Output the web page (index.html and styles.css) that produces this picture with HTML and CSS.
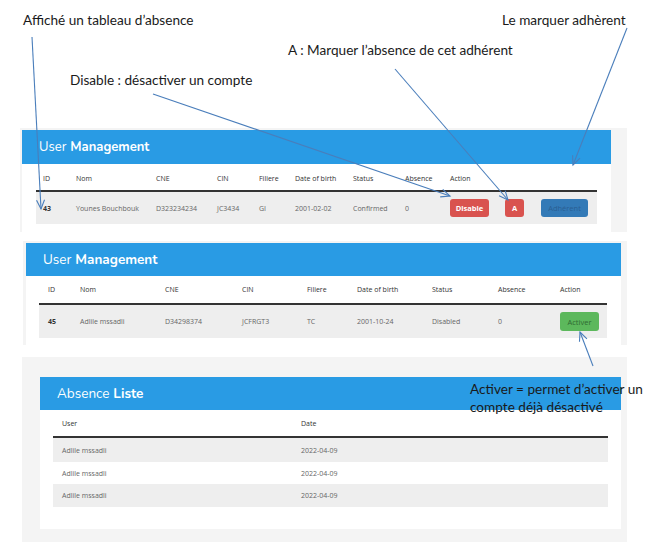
FILE: index.html
```html
<!DOCTYPE html>
<html lang="fr">
<head>
<meta charset="utf-8">
<title>User Management</title>
<link rel="stylesheet" href="styles.css">
</head>
<body>
<div class="page">
  <section class="wrap wrap1">
    <div class="card card1">
      <div class="bar"><span class="light">User</span> <b>Management</b></div>
      <table class="tbl t1">
        <colgroup><col><col><col><col><col><col><col><col><col></colgroup>
        <thead><tr><th>ID</th><th>Nom</th><th>CNE</th><th>CIN</th><th>Filiere</th><th>Date of birth</th><th>Status</th><th>Absence</th><th>Action</th></tr></thead>
        <tbody><tr class="odd"><td class="id">43</td><td>Younes Bouchbouk</td><td>D323234234</td><td>JC3434</td><td>GI</td><td>2001-02-02</td><td>Confirmed</td><td>0</td>
          <td><div class="actions"><span class="btn red w-dis">Disable</span><span class="btn red w-a">A</span><span class="btn blue w-adh">Adhérent</span></div></td></tr></tbody>
      </table>
    </div>
  </section>

  <section class="wrap wrap2">
    <div class="card card2">
      <div class="bar"><span class="light">User</span> <b>Management</b></div>
      <table class="tbl t2">
        <colgroup><col><col><col><col><col><col><col><col><col></colgroup>
        <thead><tr><th>ID</th><th>Nom</th><th>CNE</th><th>CIN</th><th>Filiere</th><th>Date of birth</th><th>Status</th><th>Absence</th><th>Action</th></tr></thead>
        <tbody><tr class="odd"><td class="id">45</td><td>Adlile mssadli</td><td>D34298374</td><td>JCFRGT3</td><td>TC</td><td>2001-10-24</td><td>Disabled</td><td>0</td>
          <td><span class="btn green w-act">Activer</span></td></tr></tbody>
      </table>
    </div>
  </section>

  <section class="wrap wrap3">
    <div class="card card3">
      <div class="bar"><span class="light">Absence</span> <b>Liste</b></div>
      <table class="tbl t3">
        <colgroup><col><col></colgroup>
        <thead><tr><th>User</th><th>Date</th></tr></thead>
        <tbody>
          <tr class="odd r1"><td>Adlile mssadli</td><td>2022-04-09</td></tr>
          <tr class="r2"><td>Adlile mssadli</td><td>2022-04-09</td></tr>
          <tr class="odd r3"><td>Adlile mssadli</td><td>2022-04-09</td></tr>
        </tbody>
      </table>
    </div>
  </section>
</div>

<div class="note n1">Affiché un tableau d’absence</div>
<div class="note n2">Disable : désactiver un compte</div>
<div class="note n3">A : Marquer l’absence de cet adhérent</div>
<div class="note n4">Le marquer adhèrent</div>
<div class="note n5">Activer = permet d’activer un<br>compte déjà désactivé</div>

<svg class="arrows" width="669" height="542" viewBox="0 0 669 542">
  <defs>
    <marker id="ah" markerUnits="userSpaceOnUse" markerWidth="12" markerHeight="12" refX="10" refY="5" orient="auto">
      <path d="M1,1 L10,5 L1,9" fill="none" stroke="#4a7ebb" stroke-width="1.1"/>
    </marker>
  </defs>
  <g stroke="#4a7ebb" stroke-width="1.1" fill="none" marker-end="url(#ah)">
    <line x1="32" y1="37" x2="41" y2="209"/>
    <line x1="153" y1="94" x2="450" y2="196"/>
    <line x1="395" y1="69" x2="508" y2="200"/>
    <line x1="627" y1="28" x2="573" y2="165"/>
    <line x1="593" y1="366" x2="580" y2="332"/>
  </g>
</svg>
</body>
</html>
```

FILE: styles.css
```css
html, body {
  margin: 0;
  padding: 0;
  background: #ffffff;
}
body {
  width: 669px;
  height: 542px;
  overflow: hidden;
  position: relative;
  font-family: "Open Sans", "Noto Sans", sans-serif;
}
.page {
  padding-top: 128px;
  display: flex;
  flex-direction: column;
}
.wrap {
  background: #f4f4f4;
  box-sizing: border-box;
}
.wrap1 {
  margin-left: 20px;
  width: 607px;
  padding: 2px 16px 0 2px;
}
.wrap2 {
  margin-top: 9px;
  margin-left: 23px;
  width: 604px;
  padding: 2px 6px 0 3px;
}
.wrap3 {
  margin-top: 12px;
  margin-left: 22px;
  width: 605px;
  padding: 20px 6px 20px 18px;
}
.card {
  background: #ffffff;
}
.card1 { padding-bottom: 8px; }
.card2 { padding-bottom: 7px; }
.card3 { padding-bottom: 22px; }

.bar {
  background: #299be4;
  color: #ffffff;
  font-family: "Nunito", "Open Sans", sans-serif;
  font-size: 13px;
  display: flex;
  align-items: center;
  gap: 4px;
  white-space: pre;
}
.bar b { font-weight: 700; }
.card1 .bar { height: 34px; padding-left: 17px; }
.card2 .bar { height: 33px; padding-left: 17px; font-size: 13.5px; }
.card3 .bar { height: 33px; padding-left: 17px; font-size: 13.5px; }

.tbl {
  border-collapse: collapse;
  table-layout: fixed;
  font-size: 7px;
  color: #666;
}
.tbl th {
  text-align: left;
  font-weight: 400;
  color: #333;
  border-bottom: 2px solid #333;
  padding: 0;
  vertical-align: middle;
}
.tbl td {
  padding: 0;
  vertical-align: middle;
  white-space: nowrap;
}
.tbl .odd { background: #eeeeee; }
.tbl .id { font-weight: 700; color: #333; }

.t1 { margin: 0 14px; width: 561px; }
.t1 th, .t1 td { padding-left: 7px; }
.t1 th { height: 24px; padding-top: 2px; }
.t1 td { height: 32px; }
.t1 col:nth-child(1) { width: 33px; }
.t1 col:nth-child(2) { width: 80px; }
.t1 col:nth-child(3) { width: 61px; }
.t1 col:nth-child(4) { width: 42px; }
.t1 col:nth-child(5) { width: 36px; }
.t1 col:nth-child(6) { width: 58px; }
.t1 col:nth-child(7) { width: 52px; }
.t1 col:nth-child(8) { width: 45px; }

.t2 { margin: 0 14px 0 13px; width: 568px; }
.t2 th, .t2 td { padding-left: 9px; }
.t2 th { height: 27px; }
.t2 td { height: 33px; }
.t2 col:nth-child(1) { width: 32px; }
.t2 col:nth-child(2) { width: 85px; }
.t2 col:nth-child(3) { width: 77px; }
.t2 col:nth-child(4) { width: 65px; }
.t2 col:nth-child(5) { width: 50px; }
.t2 col:nth-child(6) { width: 75px; }
.t2 col:nth-child(7) { width: 66px; }
.t2 col:nth-child(8) { width: 62px; }

.t3 { margin: 0 13px; width: 555px; }
.t3 th, .t3 td { padding-left: 9px; }
.t3 th { height: 26px; }
.t3 col:nth-child(1) { width: 239px; }
.t3 .r1 td { height: 24px; }
.t3 .r2 td { height: 22px; }
.t3 .r3 td { height: 23px; }

.actions {
  display: flex;
  align-items: center;
}
.btn {
  display: inline-flex;
  align-items: center;
  justify-content: center;
  border-radius: 3px;
  font-size: 7.5px;
  box-sizing: border-box;
}
.red { background: #d9534f; color: #ffffff; font-weight: 700; }
.blue { background: #337ab7; color: #2a5f93; }
.green { background: #5cb85c; color: #2f6b33; }
.w-dis { width: 39px; height: 18px; }
.w-a { width: 19px; height: 18px; margin-left: 16px; }
.w-adh { width: 47px; height: 18px; margin-left: 17px; }
.w-act { width: 39px; height: 19px; }

.note {
  position: absolute;
  font-family: "Lato", "Open Sans", sans-serif;
  font-size: 13.6px;
  line-height: 18px;
  color: #1a1a1a;
  white-space: nowrap;
}
.n1 { left: 23px; top: 11px; }
.n2 { left: 70px; top: 71px; }
.n3 { left: 288px; top: 41px; }
.n4 { left: 502px; top: 11px; }
.n5 { left: 470px; top: 380px; }

.arrows {
  position: absolute;
  left: 0;
  top: 0;
  pointer-events: none;
}
```
